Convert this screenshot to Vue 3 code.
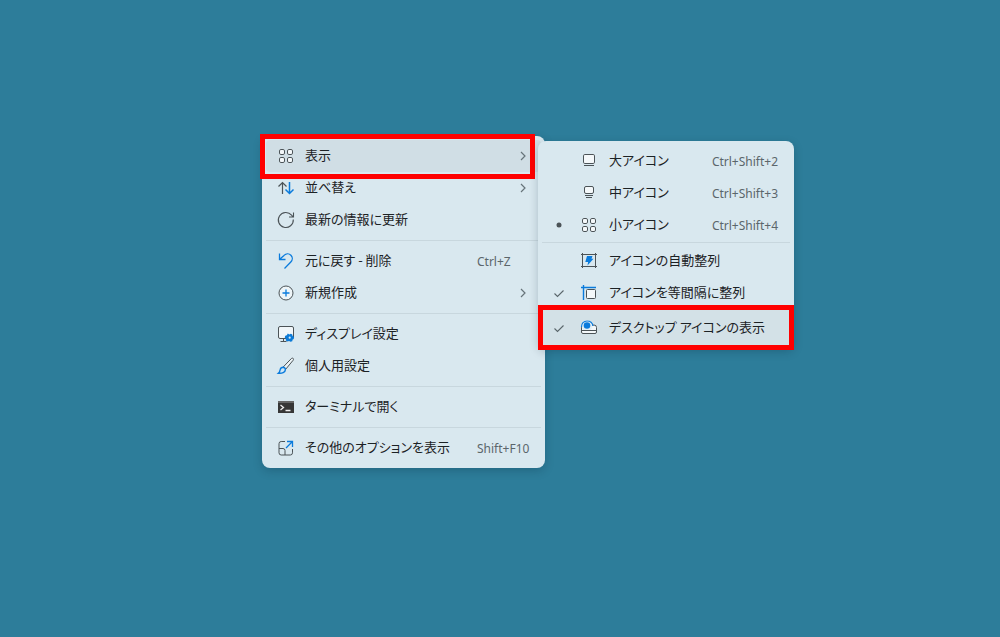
<script setup>
const mainGroups = [
  [
    { label: '表示', icon: 'grid', arrow: true, marked: true },
    { label: '並べ替え', icon: 'sort', arrow: true },
    { label: '最新の情報に更新', icon: 'refresh' },
  ],
  [
    { label: '元に戻す - 削除', icon: 'undo', keys: 'Ctrl+Z' },
    { label: '新規作成', icon: 'plus', arrow: true },
  ],
  [
    { label: 'ディスプレイ設定', icon: 'display' },
    { label: '個人用設定', icon: 'brush' },
  ],
  [{ label: 'ターミナルで開く', icon: 'terminal' }],
  [{ label: 'その他のオプションを表示', icon: 'more', keys: 'Shift+F10' }],
]

const subGroups = [
  [
    { label: '大アイコン', icon: 'large', keys: 'Ctrl+Shift+2' },
    { label: '中アイコン', icon: 'medium', keys: 'Ctrl+Shift+3' },
    { label: '小アイコン', icon: 'grid', keys: 'Ctrl+Shift+4', state: 'dot' },
  ],
  [
    { label: 'アイコンの自動整列', icon: 'auto' },
    { label: 'アイコンを等間隔に整列', icon: 'align', state: 'check' },
    { label: 'デスクトップ アイコンの表示', icon: 'desktop', state: 'check', marked: true },
  ],
]

const G = '#4b5357'
const B = '#0a7bdc'
const icons = {
  grid: `<g fill="#f4f8fa" stroke="${G}"><rect x="3.5" y="3.5" width="5" height="5" rx="1.4"/><rect x="11.5" y="3.5" width="5" height="5" rx="1.4"/><rect x="3.5" y="11.5" width="5" height="5" rx="1.4"/><rect x="11.5" y="11.5" width="5" height="5" rx="1.4"/></g>`,
  sort: `<g fill="none" stroke-width="1.2"><path stroke="${G}" d="M6.500 16V4.500M2.500 8.500l4-4 4 4"/><path stroke="${B}" stroke-width="1.500" d="M13.500 4v11.500M9.500 11.500l4 4 4-4"/></g>`,
  refresh: `<path fill="none" stroke="${G}" stroke-width="1.100" d="M17.300 9.500A7.500 7.500 0 1 1 15.600 5.200L17 6.800M17.500 2.500v4.500h-4.500"/>`,
  undo: `<path fill="none" stroke="${B}" stroke-width="1.300" d="M3.500 2.500v6h6M3.700 8.200L8 4.400C10 2.500 13 2.300 14.900 4.200S16.700 9 14.800 11L8.500 17.500"/>`,
  plus: `<circle cx="10" cy="10" r="7" fill="#eef5f8" stroke="${G}"/><path stroke="${B}" stroke-width="1.300" d="M10 6.500v7M6.500 10h7"/>`,
  display: `<rect x="2.500" y="2.500" width="15" height="12" rx="1.500" fill="#f0f6f9" stroke="${G}"/><path fill="none" stroke="${G}" d="M7.500 14.500v3M4.500 17.500h6"/><path fill="#0b7ad6" d="M11.800 9.600l1.500.8 1.600-.7 1.400.9.300 1.500 1.500 1-.4 1.800-1.200.8-.2 1.600-1.900.5-1.300-.7-1.700.4-1.500-1.100-.1-1.600-1.100-1.300.6-1.700 1.500-.5z"/><circle cx="13.700" cy="13.700" r="1.100" fill="#d5e9f5"/>`,
  brush: `<path fill="#edf4f7" stroke="${G}" d="M7.200 11L15.300 2.600c.7-.7 1.800-.6 2.100.1.200.5.100 1-.3 1.600L9.500 13.500z"/><path fill="#cfe7f7" stroke="${B}" stroke-width="1.400" d="M7 11.200c1.400.1 2.400 1 2.400 2.400C9.200 16.500 6 17.600 2.500 17.200c1.500-1 1.200-2.200 1.700-3.700.4-1.400 1.400-2.300 2.800-2.300z"/>`,
  terminal: `<rect x="2" y="4" width="16" height="12" fill="#363636"/><path fill="#666" d="M2 4h16v2H2z"/><path fill="none" stroke="#eee" stroke-width="1.300" d="M4.500 8l3 2.500-3 2.500M9.500 13.500h5"/>`,
  more: `<path fill="none" stroke="${G}" d="M9 3.500H5.200A2.200 2.200 0 0 0 3 5.700v9.100A2.200 2.200 0 0 0 5.200 17h9.100a2.200 2.200 0 0 0 2.200-2.200V11M3 10.500h4a2 2 0 0 1 2 2V17"/><path fill="none" stroke="${B}" stroke-width="1.300" d="M11 3.500h5.500V9M16.500 3.500L10 10"/>`,
  large: `<rect x="4.500" y="3.500" width="11" height="9" rx="1.300" fill="#f4f8fa" stroke="${G}"/><path stroke="${G}" d="M5 14.500h10"/>`,
  medium: `<rect x="5.500" y="3.500" width="9" height="7" rx="1.500" fill="#f4f8fa" stroke="${G}"/><path stroke="${G}" d="M6 12.500h8M7 14.500h6"/>`,
  auto: `<path fill="none" stroke="${G}" d="M3.500 2v15M16.500 2v15M2 3.500h16M2 15.500h16"/><path fill="${B}" d="M8 5h5.500l-1 2.700h2L8.500 14.400l.6-3.400H6.300z"/>`,
  align: `<path fill="none" stroke="${B}" stroke-width="1.400" d="M2 4.500h15M4.500 2V17"/><rect x="7.500" y="6.500" width="9" height="9" rx="1" fill="#f4f8fa" stroke="${G}"/>`,
  desktop: `<path fill="#f4f8fa" stroke="${G}" d="M2.500 9v5A1.500 1.500 0 0 0 4 15.500h12a1.500 1.500 0 0 0 1.500-1.500V9.500A2.500 2.500 0 0 0 15 7z"/><path stroke="${G}" d="M3 12.500h14"/><circle cx="8" cy="7.500" r="5.500" fill="#e3eff5"/><path fill="none" stroke="${B}" stroke-width="1.200" d="M2.500 9C2.300 5.500 4.800 3 8 3s5.400 1.800 6 5"/><circle cx="8" cy="7.500" r="3.300" fill="${B}"/><path stroke="${G}" d="M3 12.500h14"/>`,
}
</script>

<template>
  <main class="desktop">
    <div class="menu main-menu" role="menu">
      <div v-for="(group, g) in mainGroups" :key="g" class="group" role="group">
        <button v-for="item in group" :key="item.label" type="button" role="menuitem" class="item" :class="{ active: item.marked }">
          <svg class="icon" viewBox="0 0 20 20" aria-hidden="true" v-html="icons[item.icon]"></svg>
          <span class="label">{{ item.label }}</span>
          <span v-if="item.keys" class="keys">{{ item.keys }}</span>
          <svg v-if="item.arrow" class="arrow" viewBox="0 0 8 12" aria-hidden="true"><path d="M2 2l4 4-4 4" /></svg>
        </button>
      </div>
      <div class="frame main-frame"></div>
    </div>

    <div class="menu sub-menu" role="menu">
      <div v-for="(group, g) in subGroups" :key="g" class="group" role="group">
        <button v-for="item in group" :key="item.label" type="button" role="menuitem" class="item" :class="{ active: item.marked }">
          <svg class="state" viewBox="0 0 12 12" aria-hidden="true">
            <circle v-if="item.state === 'dot'" cx="6" cy="6" r="2.5" />
            <path v-if="item.state === 'check'" d="M1.500 6.500l3 3 6-6" />
          </svg>
          <svg class="icon" viewBox="0 0 20 20" aria-hidden="true" v-html="icons[item.icon]"></svg>
          <span class="label">{{ item.label }}</span>
          <span v-if="item.keys" class="keys">{{ item.keys }}</span>
        </button>
      </div>
      <div class="frame sub-frame"></div>
    </div>
  </main>
</template>

<style>
body {
  margin: 0;
}
</style>

<style scoped>
.desktop {
  position: relative;
  min-height: 100vh;
  overflow: hidden;
  background: #2d7d9a;
  font-family: "Noto Sans CJK JP", sans-serif;
}
.menu {
  position: absolute;
  box-sizing: border-box;
  padding: 4px;
  border-radius: 8px;
  background: #d9e8ef;
  box-shadow: 0 3px 10px rgba(0, 30, 50, 0.22);
}
.main-menu {
  left: 262px;
  top: 136px;
  width: 283px;
}
.sub-menu {
  left: 538px;
  top: 141px;
  width: 256px;
  padding-bottom: 2px;
}
.group + .group {
  margin-top: 4px;
  padding-top: 4px;
  border-top: 1px solid #c8d7de;
}
.sub-menu .group + .group {
  margin-top: 1px;
  padding-top: 2px;
}
.item {
  display: flex;
  align-items: center;
  width: 100%;
  height: 32px;
  padding: 0 10px;
  border: 0;
  border-radius: 4px;
  background: none;
  color: #1c2225;
  font-family: inherit;
  font-size: 13px;
  line-height: 20px;
  font-feature-settings: "palt";
  text-align: left;
}
.item.active {
  background: #d0dee5;
}
.icon {
  flex: none;
  width: 20px;
  height: 20px;
}
.label {
  flex: 1;
  padding: 0 0 2px 9px;
  white-space: nowrap;
}
.keys {
  width: 54px;
  padding-top: 2px;
  color: #5b666b;
  font-family: "Noto Sans", sans-serif;
  font-size: 12px;
  white-space: nowrap;
}
.arrow {
  width: 8px;
  height: 12px;
  margin-right: 4px;
  fill: none;
  stroke: #67747a;
  stroke-width: 1.2;
}
.sub-menu .keys {
  width: auto;
  margin-right: 2px;
}
.state {
  flex: none;
  width: 12px;
  height: 12px;
  margin: 0 14px 0 1px;
  fill: #4b5357;
}
.state path {
  fill: none;
  stroke: #59656a;
  stroke-width: 1.1;
}
.sub-menu .label {
  padding-left: 10px;
}
.sub-menu .active {
  height: 38px;
  background: #d3e1e7;
}
.frame {
  position: absolute;
  box-sizing: border-box;
  height: 45px;
  border: 5px solid #f00;
  pointer-events: none;
}
.main-frame {
  left: -2px;
  right: 10px;
  top: -2px;
}
.sub-frame {
  left: 0;
  right: 0;
  bottom: -1px;
}
</style>
